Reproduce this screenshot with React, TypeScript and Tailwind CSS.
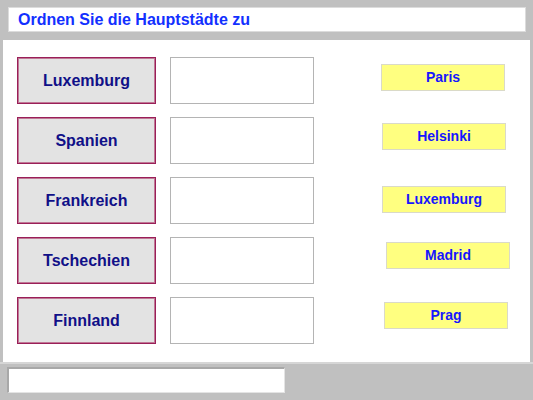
const countries = ["Luxemburg", "Spanien", "Frankreich", "Tschechien", "Finnland"];

const cities = [
  { label: "Paris", className: "mt-[24px] ml-0" },
  { label: "Helsinki", className: "mt-[32px] ml-[1px]" },
  { label: "Luxemburg", className: "mt-[36px] ml-[1px]" },
  { label: "Madrid", className: "mt-[29px] ml-[5px]" },
  { label: "Prag", className: "mt-[33px] ml-[3px]" },
];

export default function App() {
  return (
    <div className="flex h-[400px] w-[533px] flex-col bg-[#c0c0c0] font-['Liberation_Sans',Arial,sans-serif]">
      <div className="h-[40px] pl-[8px] pt-[7px]">
        <div className="flex h-[25px] w-[518px] items-center border border-[color:#dcdcdc] bg-white pl-[9px] text-[16px] font-bold text-[#1230ff]">
          Ordnen Sie die Hauptstädte zu
        </div>
      </div>

      <div className="ml-[3px] flex h-[322px] w-[527px] bg-white">
        <div className="flex w-[311px] flex-col gap-[13px] pl-[14px] pt-[17px]">
          {countries.map((name) => (
            <div key={name} className="flex gap-[14px]">
              <div className="flex h-[47px] w-[139px] items-center justify-center border border-[color:#9a1f58] bg-[#e3e3e3] text-[16px] font-bold text-[#101088] shadow-[inset_0_0_0_1px_#c07896]">
                {name}
              </div>
              <div className="h-[47px] w-[144px] border border-[color:#b4b4b4] bg-white" />
            </div>
          ))}
        </div>

        <div className="ml-[67px] flex flex-col items-start">
          {cities.map((city) => (
            <div
              key={city.label}
              className={`flex h-[27px] w-[124px] items-center justify-center border border-[color:#dadac8] bg-[#ffff80] text-[14px] font-bold text-[#1616ff] ${city.className}`}
            >
              {city.label}
            </div>
          ))}
        </div>
      </div>

      <div className="flex-1 border-t-2 border-[color:#d6d6d6] pl-[7px] pt-[3px]">
        <div className="h-[26px] w-[278px] border-t-2 border-l-2 border-b border-r border-t-[color:#a8a8a8] border-l-[color:#a8a8a8] border-b-[color:#e4e4e4] border-r-[color:#e4e4e4] bg-white" />
      </div>
    </div>
  );
}
